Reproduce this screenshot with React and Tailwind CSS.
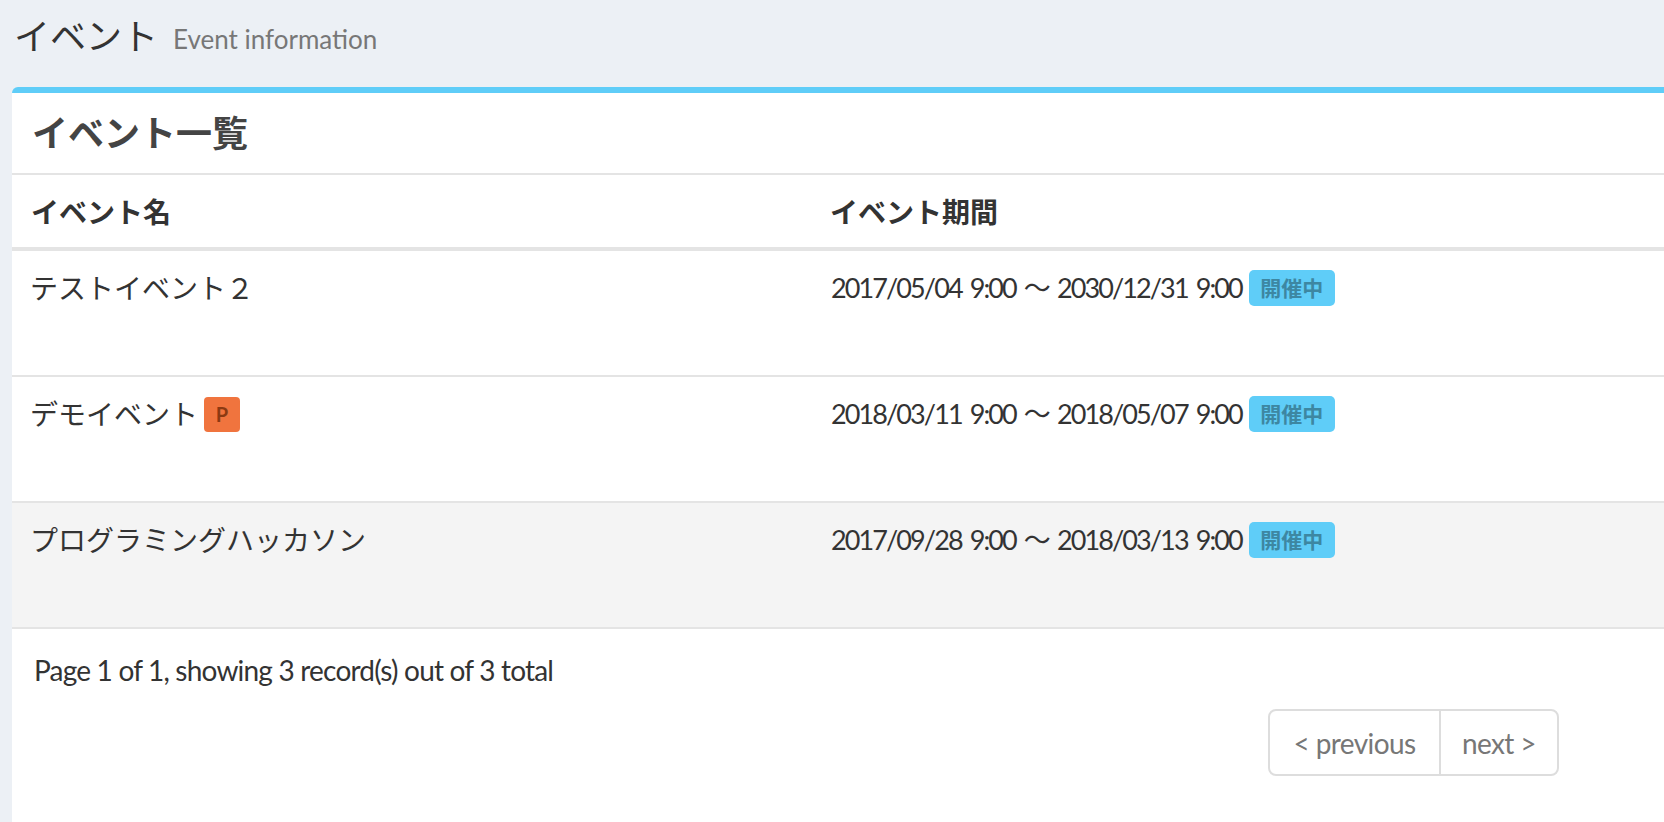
import React from "react";

const rows = [
  { name: "テストイベント２", p: false, period: "2017/05/04 9:00 〜 2030/12/31 9:00", bg: "bg-white" },
  { name: "デモイベント", p: true, period: "2018/03/11 9:00 〜 2018/05/07 9:00", bg: "bg-white" },
  { name: "プログラミングハッカソン", p: false, period: "2017/09/28 9:00 〜 2018/03/13 9:00", bg: "bg-[#f4f4f4]" },
];

export default function App() {
  return (
    <div
      className="min-h-[822px] w-[1664px] overflow-hidden bg-[#ecf0f5] text-[#333]"
      style={{ fontFamily: '"Lato", "Noto Sans CJK JP", sans-serif' }}
    >
      <div className="flex h-[87px] items-start gap-[15px] pl-[14px] pt-[12px]">
        <h1 className="text-[36px] font-normal leading-[48px] text-[#333]">イベント</h1>
        <span className="pt-[10px] text-[26px] leading-[34px] text-[#777]">Event information</span>
      </div>
      <div className="ml-[12px] min-h-[735px] rounded-tl-[6px] border-t-[6px] border-[#5fcdf8] bg-white">
        <div className="flex h-[82px] items-center border-b-2 border-[#e4e4e4] pl-[20px]">
          <h3 className="text-[36px] font-bold leading-[40px] text-[#444]">イベント一覧</h3>
        </div>
        <div className="grid h-[76px] grid-cols-[808px_1fr] items-center border-b-4 border-[#e4e4e4] pt-[2px] text-[28px] font-bold">
          <div className="pl-[19px]">イベント名</div>
          <div className="pl-[10px]">イベント期間</div>
        </div>
        {rows.map((r, i) => (
          <div key={i} className={`grid h-[126px] grid-cols-[808px_1fr] items-start border-b-2 border-[#e4e4e4] ${r.bg}`}>
            <div className="flex items-center gap-[6px] pl-[18px] pt-[17px] text-[28px] leading-[40px]">
              <span>{r.name}</span>
              {r.p && (
                <span className="flex h-[35px] w-[36px] items-center justify-center rounded-[4px] bg-[#f0743e] text-[20px] font-bold text-[#8b3a12]">
                  P
                </span>
              )}
            </div>
            <div className="flex items-center gap-[7px] pl-[11px] pt-[17px] text-[27px] leading-[40px]">
              <span className="tracking-[-1.9px] [word-spacing:3px]">{r.period}</span>
              <span className="flex h-[36px] w-[86px] items-center justify-center rounded-[5px] bg-[#5fcdf8] text-[21px] font-bold text-[#3d87a2]">
                開催中
              </span>
            </div>
          </div>
        ))}
        <div className="pl-[22px] pt-[21px] text-[28px] leading-[40px] tracking-[-0.8px]">Page 1 of 1, showing 3 record(s) out of 3 total</div>
        <div className="flex justify-end pr-[105px] pt-[19px]">
          <div className="flex h-[67px] overflow-hidden rounded-[8px] border-2 border-[#dddddd] text-[28px] tracking-[-0.6px] text-[#777]">
            <div className="flex w-[171px] items-center justify-center border-r-2 border-[#dddddd]">&lt; previous</div>
            <div className="flex w-[116px] items-center justify-center">next &gt;</div>
          </div>
        </div>
      </div>
    </div>
  );
}
